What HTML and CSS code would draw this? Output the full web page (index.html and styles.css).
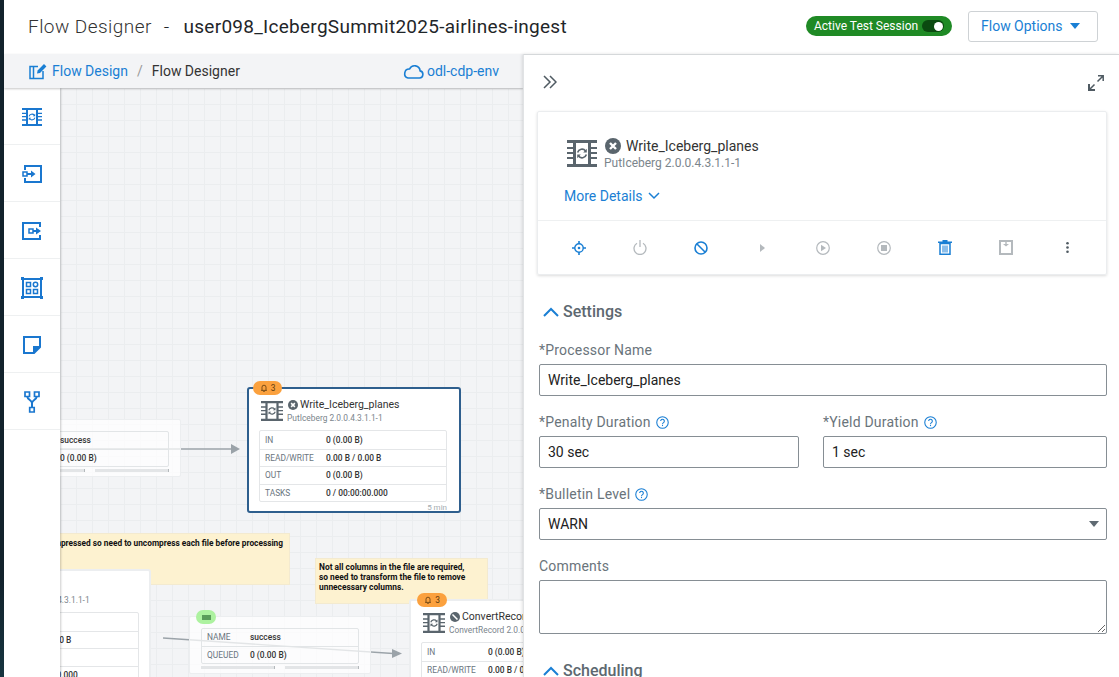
FILE: index.html
```html
<!DOCTYPE html>
<html lang="en">
<head>
<meta charset="utf-8">
<title>Flow Designer</title>
<link rel="stylesheet" href="styles.css">
</head>
<body>
<svg class="defs" width="0" height="0" aria-hidden="true">
  <defs>
    <symbol id="proc" viewBox="0 0 30 27">
      <path fill="currentColor" d="M0 0h30v3H0zM0 24h30v3H0zM6 3h3v21H6zM21 3h3v21h-3zM0 7h6v2H0zM0 12h6v2H0zM0 17h6v2H0zM24 7h6v2h-6zM24 12h6v2h-6zM24 17h6v2h-6z"/>
      <path fill="none" stroke="currentColor" stroke-width="1.6" d="M10.6 12.5a4.6 4.6 0 0 1 8-1.6M19.4 14.5a4.6 4.6 0 0 1-8 1.6"/>
      <path fill="currentColor" d="M19.8 8.8v3.6h-3.6zM10.2 18.2v-3.6h3.6z"/>
    </symbol>
    <symbol id="stopped" viewBox="0 0 16 16">
      <circle cx="8" cy="8" r="8" fill="currentColor"/>
      <path stroke="#fff" stroke-width="2.4" d="M5 5l6 6M11 5l-6 6"/>
    </symbol>
    <symbol id="help" viewBox="0 0 12 12">
      <circle cx="6" cy="6" r="5.3" fill="none" stroke="currentColor"/>
      <path fill="none" stroke="currentColor" d="M4.3 4.7a1.7 1.7 0 1 1 2.6 1.4C6.300 6.500 6 6.800 6 7.500"/>
      <path fill="currentColor" d="M5.500 8.300h1v1h-1z"/>
    </symbol>
    <symbol id="bell" viewBox="0 0 10 10">
      <path fill="none" stroke="currentColor" d="M1.500 8h7M2.500 8V4a2.500 2.500 0 0 1 5 0v4M4 9.500h2"/>
    </symbol>
    <symbol id="up" viewBox="0 0 16 10">
      <path fill="none" stroke="currentColor" stroke-width="2" d="M1 9l7-7 7 7"/>
    </symbol>
  </defs>
</svg>

<div class="rail"></div>
<div class="app">
  <header class="topbar">
    <h1 class="page-title"><span class="title-light">Flow Designer</span><span class="title-sep">-</span><span class="title-name">user098_IcebergSummit2025-airlines-ingest</span></h1>
    <div class="session">Active Test Session<span class="toggle"><span class="knob"></span></span></div>
    <button class="options" type="button">Flow Options<span class="caret"></span></button>
  </header>

  <div class="workspace">
    <section class="designer">
      <nav class="crumbs">
        <svg class="crumb-icon" width="18" height="17" viewBox="0 0 18 17"><path fill="none" stroke="currentColor" stroke-width="1.500" d="M1 3.500h3.500v12H1zM4.500 3.500H9M4.500 15.500H14V8"/><path fill="currentColor" d="M8 10.500l.6-3L15 1l2.400 2.400-6.400 6.500z"/></svg>
        <a class="crumb-link">Flow Design</a>
        <span class="crumb-sep">/</span>
        <span class="crumb-current">Flow Designer</span>
        <span class="env">
          <svg width="21" height="15" viewBox="0 0 21 15"><path fill="none" stroke="currentColor" stroke-width="1.600" d="M5 14h11.500a3.600 3.600 0 0 0 .6-7.100A5.500 5.500 0 0 0 6.600 5 4.600 4.600 0 0 0 5 14z"/></svg>
          odl-cdp-env
        </span>
      </nav>
      <div class="stage">
        <aside class="tools">
          <div class="tool"><svg width="20" height="18"><use href="#proc"/></svg></div>
          <div class="tool"><svg width="20" height="18" viewBox="0 0 20 18"><path fill="none" stroke="currentColor" stroke-width="2" d="M3 5V1h16v16H3v-4"/><path fill="none" stroke="currentColor" stroke-width="1.500" d="M1 7h4v4H1z"/><path fill="currentColor" d="M5 8h4V5.500L13.500 9 9 12.500V10H5z"/></svg></div>
          <div class="tool"><svg width="20" height="18" viewBox="0 0 20 18"><path fill="none" stroke="currentColor" stroke-width="2" d="M18 5V1H1v16h17v-4"/><path fill="none" stroke="currentColor" stroke-width="1.500" d="M7 7h4v4H7z"/><path fill="currentColor" d="M11 8h3V5.500L19 9l-5 3.500V10h-3z"/></svg></div>
          <div class="tool"><svg width="22" height="22" viewBox="0 0 22 22"><path fill="none" stroke="currentColor" stroke-width="2" d="M2 2h18v18H2z"/><path fill="currentColor" d="M0 0h3v3H0zM19 0h3v3h-3zM0 19h3v3H0zM19 19h3v3h-3z"/><path fill="none" stroke="currentColor" stroke-width="1.500" d="M5.500 5.500h4v4h-4zM5.500 12.500h4v4h-4zM12.500 12.500h4v4h-4z"/><circle cx="14.500" cy="7.500" r="2.200" fill="none" stroke="currentColor" stroke-width="1.500"/></svg></div>
          <div class="tool"><svg width="18" height="18" viewBox="0 0 18 18"><path fill="none" stroke="currentColor" stroke-width="2" d="M1 1h16v10l-6 6H1z"/><path fill="currentColor" d="M10 17v-7h7v1l-6 6z"/></svg></div>
          <div class="tool"><svg width="16" height="22" viewBox="0 0 16 22"><path fill="none" stroke="currentColor" stroke-width="1.700" d="M1 1h4.500v4.500H1zM10.500 1H15v4.500h-4.500zM5.700 16.500h4.500V21H5.700z"/><path fill="none" stroke="currentColor" stroke-width="2" d="M3.200 5.500C3.500 9 8 9 8 12c0-3 4.500-3 4.800-6.500M8 11v5"/></svg></div>
        </aside>

        <div class="canvas">
          <svg class="edges" width="463" height="589" viewBox="0 0 463 589" aria-hidden="true">
            <path class="edge" d="M0 361H172"/>
            <path class="edge-head" d="M171 356l9 5-9 5z"/>
            <path class="edge" d="M103 550L333 565.500"/>
            <path class="edge-head" d="M332 561l10 4.500-10 4.500z"/>
          </svg>

          <div class="conn conn-top">
            <div class="conn-table">
              <div class="conn-row"><span class="k">NAME</span><span class="v">success</span></div>
              <div class="conn-row"><span class="k">QUEUED</span><span class="v">0 (0.00 B)</span></div>
            </div>
            <div class="conn-bars"><span></span><span></span></div>
          </div>

          <div class="note note-wide">Files are compressed so need to uncompress each file before processing</div>
          <div class="note note-small">Not all columns in the file are required,<br>so need to transform the file to remove<br>unnecessary columns.</div>

          <div class="node node-main">
            <span class="bulletin"><svg width="8" height="8"><use href="#bell"/></svg>3</span>
            <div class="node-head">
              <svg class="node-icon" width="22" height="20"><use href="#proc"/></svg>
              <div class="node-text">
                <div class="node-title"><svg width="10" height="10"><use href="#stopped"/></svg>Write_Iceberg_planes</div>
                <div class="node-sub">PutIceberg 2.0.0.4.3.1.1-1</div>
              </div>
            </div>
            <div class="stats">
              <div class="stat"><span class="k">IN</span><span class="v">0 (0.00 B)</span></div>
              <div class="stat"><span class="k">READ/WRITE</span><span class="v">0.00 B / 0.00 B</span></div>
              <div class="stat"><span class="k">OUT</span><span class="v">0 (0.00 B)</span></div>
              <div class="stat"><span class="k">TASKS</span><span class="v">0 / 00:00:00.000</span></div>
            </div>
            <div class="node-foot">5 min</div>
          </div>

          <div class="node node-left">
            <div class="node-head">
              <svg class="node-icon" width="22" height="20"><use href="#proc"/></svg>
              <div class="node-text">
                <div class="node-title"><svg width="10" height="10"><use href="#stopped"/></svg>Uncompress</div>
                <div class="node-sub">UnpackContent 2.0.0.4.3.1.1-1</div>
              </div>
            </div>
            <div class="stats">
              <div class="stat"><span class="k">IN</span><span class="v"></span></div>
              <div class="stat"><span class="k">READ/WRITE</span><span class="v">0.00 B / 0.00 B</span></div>
              <div class="stat"><span class="k">OUT</span><span class="v"></span></div>
              <div class="stat"><span class="k">TASKS</span><span class="v">0 / 00:00:00.000</span></div>
            </div>
          </div>

          <div class="conn conn-bottom">
            <span class="conn-badge"><i></i></span>
            <div class="conn-table">
              <div class="conn-row"><span class="k">NAME</span><span class="v">success</span></div>
              <div class="conn-row"><span class="k">QUEUED</span><span class="v">0 (0.00 B)</span></div>
            </div>
            <div class="conn-bars"><span></span><span></span></div>
          </div>

          <div class="node node-convert">
            <span class="bulletin"><svg width="8" height="8"><use href="#bell"/></svg>3</span>
            <div class="node-head">
              <svg class="node-icon" width="22" height="20"><use href="#proc"/></svg>
              <div class="node-text">
                <div class="node-title"><svg width="10" height="10" viewBox="0 0 16 16"><circle cx="8" cy="8" r="8" fill="currentColor"/><path stroke="#fff" stroke-width="2.400" d="M4 4l8 8"/></svg>ConvertRecord</div>
                <div class="node-sub">ConvertRecord 2.0.0.4.3.1.1-1</div>
              </div>
            </div>
            <div class="stats">
              <div class="stat"><span class="k">IN</span><span class="v">0 (0.00 B)</span></div>
              <div class="stat"><span class="k">READ/WRITE</span><span class="v">0.00 B / 0.00 B</span></div>
            </div>
          </div>
        </div>
      </div>
    </section>

    <aside class="panel">
      <div class="panel-top">
        <svg class="collapse" width="14" height="14" viewBox="0 0 14 14"><path fill="none" stroke="currentColor" stroke-width="1.500" d="M1 1l6 6-6 6M7 1l6 6-6 6"/></svg>
        <svg class="expand" width="16" height="16" viewBox="0 0 16 16"><path fill="none" stroke="currentColor" stroke-width="1.500" d="M9.500 6.500L15 1M10 .8h5.200V6M6.500 9.500L1 15"/><path fill="currentColor" d="M0 9h2v5h5v2H0z"/></svg>
      </div>

      <div class="card">
        <div class="card-body">
          <div class="card-head">
            <svg class="card-icon" width="30" height="27"><use href="#proc"/></svg>
            <div>
              <div class="card-title"><svg width="16" height="16"><use href="#stopped"/></svg>Write_Iceberg_planes</div>
              <div class="card-sub">PutIceberg 2.0.0.4.3.1.1-1</div>
            </div>
          </div>
          <a class="more">More Details<svg width="12" height="8" viewBox="0 0 12 8"><path fill="none" stroke="currentColor" stroke-width="1.500" d="M1 1l5 5 5-5"/></svg></a>
        </div>
        <div class="actions">
          <span class="action on"><svg width="14" height="14" viewBox="0 0 14 14"><circle cx="7" cy="7" r="4.200" fill="none" stroke="currentColor" stroke-width="1.400"/><circle cx="7" cy="7" r="1.300" fill="currentColor"/><path stroke="currentColor" stroke-width="1.600" d="M7 0v3M7 11v3M0 7h3M11 7h3"/></svg></span>
          <span class="action off"><svg width="14" height="15" viewBox="0 0 14 15"><path fill="none" stroke="currentColor" stroke-width="1.300" d="M4 3.300a6 6 0 1 0 6 0M7 0v7"/></svg></span>
          <span class="action on"><svg width="14" height="14" viewBox="0 0 14 14"><circle cx="7" cy="7" r="6" fill="none" stroke="currentColor" stroke-width="1.600"/><path stroke="currentColor" stroke-width="1.600" d="M3 3l8 8"/></svg></span>
          <span class="action off"><svg width="5" height="8" viewBox="0 0 5 8"><path fill="currentColor" d="M0 0l5 4-5 4z"/></svg></span>
          <span class="action off"><svg width="14" height="14" viewBox="0 0 14 14"><circle cx="7" cy="7" r="6.300" fill="none" stroke="currentColor" stroke-width="1.200"/><path fill="currentColor" d="M5 3.800L10 7l-5 3.200z"/></svg></span>
          <span class="action off"><svg width="14" height="14" viewBox="0 0 14 14"><circle cx="7" cy="7" r="6.300" fill="none" stroke="currentColor" stroke-width="1.200"/><path fill="currentColor" d="M4 4h6v6H4z"/></svg></span>
          <span class="action on"><svg width="14" height="15" viewBox="0 0 14 15"><path fill="currentColor" d="M0 1.500h4.500V0h5v1.500H14V3H0z"/><path fill="none" stroke="currentColor" stroke-width="1.500" d="M2 3.500h10v10.700H2z"/><path stroke="currentColor" d="M5 5.500v7M7 5.500v7M9 5.500v7"/></svg></span>
          <span class="action off"><svg width="14" height="15" viewBox="0 0 14 15"><path fill="none" stroke="currentColor" stroke-width="2" d="M1 1h12v13H1z"/><path fill="currentColor" d="M6.300 2h1.400v2H10L7 6.500 4 4h2.300z"/></svg></span>
          <span class="action dots"><svg width="3" height="11" viewBox="0 0 3 11"><circle cx="1.500" cy="1.300" r="1.300" fill="currentColor"/><circle cx="1.500" cy="5.500" r="1.300" fill="currentColor"/><circle cx="1.500" cy="9.700" r="1.300" fill="currentColor"/></svg></span>
        </div>
      </div>

      <form class="form">
        <h2 class="section"><svg width="16" height="10"><use href="#up"/></svg>Settings</h2>
        <div class="group">
          <div class="label">*Processor Name</div>
          <div class="input">Write_Iceberg_planes</div>
        </div>
        <div class="group two">
          <div>
            <div class="label">*Penalty Duration<svg width="13" height="13"><use href="#help"/></svg></div>
            <div class="input">30 sec</div>
          </div>
          <div>
            <div class="label">*Yield Duration<svg width="13" height="13"><use href="#help"/></svg></div>
            <div class="input">1 sec</div>
          </div>
        </div>
        <div class="group">
          <div class="label">*Bulletin Level<svg width="13" height="13"><use href="#help"/></svg></div>
          <div class="input select">WARN<span class="select-caret"></span></div>
        </div>
        <div class="group">
          <div class="label">Comments</div>
          <textarea class="comments" aria-label="Comments"></textarea>
        </div>
        <h2 class="section section-next"><svg width="16" height="10"><use href="#up"/></svg>Scheduling</h2>
      </form>
    </aside>
  </div>
</div>
</body>
</html>
```

FILE: styles.css
```css
* { box-sizing: border-box; }
html, body { height: 100%; }
body {
  margin: 0;
  display: flex;
  height: 677px;
  overflow: hidden;
  font-family: Roboto, "Liberation Sans", sans-serif;
  font-size: 14px;
  color: #333;
  background: #fff;
}
.defs { position: absolute; }
.rail { width: 4px; flex: none; background: linear-gradient(#12222c 85%, #173540); }
.app { flex: 1; min-width: 0; display: flex; flex-direction: column; }

/* top bar */
.topbar { height: 54px; flex: none; display: flex; align-items: center; padding: 0 21px 2px 24px; }
.page-title { margin: 0 auto 0 0; font-size: 19px; font-weight: 400; display: flex; align-items: baseline; letter-spacing: .27px; color: #1f2629; }
.title-light { font-weight: 300; color: #333; letter-spacing: .45px; }
.title-sep { margin: 0 14px 0 12px; font-weight: 300; }
.session {
  width: 146px; height: 20px; border-radius: 10px; background: #1f8a25; color: #fff;
  font-size: 12px; display: flex; align-items: center; justify-content: space-between; padding: 0 8px 0 8px;
}
.toggle { width: 22px; height: 12px; border-radius: 6px; background: #0b4a10; display: flex; align-items: center; justify-content: flex-end; padding-right: 1px; }
.knob { width: 9px; height: 9px; border-radius: 50%; background: #fff; }
.options {
  width: 130px; height: 31px; margin-left: 16px; padding: 0 0 0 12px;
  display: flex; align-items: center; background: #fff; border: 1px solid #ced2d5; border-radius: 3px;
  font: 14px Roboto, sans-serif; color: #1a7fd4;
}
.caret { margin-left: 7px; border: 5.500px solid transparent; border-top: 6px solid #1a7fd4; border-bottom: 0; margin-top: -1px; }

/* workspace */
.workspace { flex: 1; min-height: 0; display: flex; }
.designer { width: 519px; flex: none; display: flex; flex-direction: column; }
.crumbs {
  height: 34px; flex: none; display: flex; align-items: center; padding: 0 24px 0 25px;
  background: #f3f4f6; box-shadow: 0 1px 2px rgba(0,0,0,.22); position: relative; z-index: 3;
}
.crumb-icon { color: #1a7fd4; margin-right: 5px; }
.crumb-link { color: #1a7fd4; }
.crumb-sep { margin: 0 9px 0 9px; color: #999; }
.crumb-current { color: #333; }
.env { margin-left: auto; display: flex; align-items: center; gap: 3px; color: #1a7fd4; }
.stage { flex: 1; min-height: 0; display: flex; }
.tools { width: 56px; flex: none; background: #fff; box-shadow: 1px 0 2px rgba(0,0,0,.2); position: relative; z-index: 2; }
.tool { height: 57px; display: flex; align-items: center; justify-content: center; border-bottom: 1px solid #eef0f1; color: #1a77cf; padding-top: 1px; }

/* canvas */
.canvas {
  flex: 1; position: relative; overflow: hidden; background-color: #f3f4f6;
  background-image: linear-gradient(#ebedef 1px, transparent 1px), linear-gradient(90deg, #ebedef 1px, transparent 1px);
  background-size: 16px 16px;
}
.edges { position: absolute; left: 0; top: 0; }
.edge { stroke: #9ba3a9; stroke-width: 1.300; fill: none; }
.edge-head { fill: #9ba3a9; }

.note { position: absolute; background: #fdf2d0; border: 1px solid #f3ead0; font-size: 8.400px; font-weight: 700; line-height: 10px; color: #111; padding: 3px 3px; }
.note-wide { left: -130px; top: 445px; width: 360px; height: 52px; text-align: right; padding: 4px 6px 0 0; font-size: 8.300px; }
.note-small { left: 255px; top: 470px; width: 173px; height: 46px; }

.conn { position: absolute; width: 182px; height: 58px; background: rgba(255,255,255,.72); border: 1px solid #eceef0; border-radius: 2px; padding: 11px 11px 0; font-size: 8.400px; }
.conn-top { left: -61px; top: 331px; }
.conn-bottom { left: 129px; top: 528px; }
.conn-table { border: 1px solid #e2e5e7; border-radius: 2px; height: 36px; }
.conn-row { height: 17px; display: flex; align-items: center; padding: 0 0 1px 5px; }
.conn-row + .conn-row { border-top: 1px solid #e2e5e7; height: 18px; }
.conn-row .k { width: 43px; color: #6b7680; }
.conn-row .v { color: #333; font-weight: 500; }
.conn-bars { display: flex; gap: 10px; margin-top: 2px; }
.conn-bars span { height: 3px; width: 75px; background: #e3e5e7; border-right: 1px solid #b4b9bc; }
.conn-badge { position: absolute; left: 6px; top: -7px; width: 20px; height: 14px; border-radius: 7px; background: #adf2a0; display: flex; align-items: center; justify-content: center; }
.conn-badge i { width: 9px; height: 5px; background: #5a9d5a; }

.node { position: absolute; width: 214px; height: 126px; background: #fff; border: 2px solid #eceef0; border-radius: 3px; padding: 0 12px 0 10px; font-size: 8.400px; }
.node-main { left: 187px; top: 299px; border-color: #2f5f8e; z-index: 1; }
.node-left { left: -123px; top: 481px; padding-right: 10px; }
.node-convert { left: 349px; top: 511px; }
.bulletin {
  position: absolute; left: 4px; top: -8px; width: 29px; height: 14px; border-radius: 7px;
  background: #fba13e; color: #5a3a10; font-size: 8.400px;
  display: flex; align-items: center; justify-content: center; gap: 3px;
}
.node-convert .bulletin { left: 6px; width: 30px; }
.node-head { height: 41px; display: flex; padding: 12px 0 0 2px; }
.node-icon { color: #5a656d; margin-right: 4px; flex: none; }
.node-text { min-width: 0; white-space: nowrap; }
.node-title { display: flex; align-items: center; gap: 2px; font-size: 10.500px; line-height: 12px; height: 12px; color: #333; padding-left: 1px; margin-top: -2px; }
.node-title svg { color: #5a656d; flex: none; }
.node-sub { color: #7b858c; line-height: 12px; margin-top: 1px; }
.stats { border: 1px solid #e4e6e8; border-radius: 2px; }
.stat { height: 17.500px; display: flex; align-items: center; padding-left: 5px; }
.stat + .stat { border-top: 1px solid #e4e6e8; }
.stat .k { width: 61px; flex: none; color: #6b7680; }
.stat .v { font-weight: 500; color: #333; white-space: nowrap; }
.node-foot { text-align: right; color: #a4abb0; font-size: 8px; line-height: 11px; margin-top: 0; }

/* panel */
.panel { flex: 1; min-width: 0; background: #fff; border-top: 1px solid #d5d8da; border-left: 1px solid #e1e3e5; box-shadow: -1px 0 3px rgba(0,0,0,.12); position: relative; z-index: 4; padding: 0 12px 0 13px; overflow: hidden; }
.panel-top { height: 56px; display: flex; align-items: flex-start; justify-content: space-between; padding: 20px 3px 0 6px; color: #4f5a62; }
.collapse { margin-left: 0; }
.card { border: 1px solid #ebedef; border-radius: 2px; box-shadow: 0 1px 3px rgba(0,0,0,.14); height: 164px; }
.card-body { height: 109px; padding: 28px 0 0 29px; border-bottom: 1px solid #eef0f1; }
.card-head { display: flex; color: #333; }
.card-icon { color: #5a656d; margin-right: 7px; flex: none; }
.card-title { display: flex; align-items: center; gap: 5px; font-size: 14px; line-height: 16px; margin-top: -2px; padding-left: 1px; }
.card-title svg { color: #5a656d; }
.card-sub { font-size: 12px; line-height: 14px; color: #7b858c; margin-top: 2px; }
.more { display: flex; align-items: center; gap: 5px; margin: 16px 0 0 -3px; color: #1a7fd4; line-height: 20px; }
.actions { display: flex; padding-left: 10.500px; height: 53px; align-items: center; }
.action { width: 61px; display: flex; justify-content: center; }
.action.on { color: #1a7fd4; }
.action.off { color: #b4b9bd; }
.action.dots { color: #4f5a62; }

.form { padding-left: 2px; }
.section { margin: 25px 0 16px; height: 24px; display: flex; align-items: center; gap: 4px; font-size: 16px; font-weight: 500; color: #5d6870; padding: 0 0 1px 4px; }
.section svg { color: #1a7fd4; flex: none; margin-top: 1px; }
.section-next { margin-top: 25px; }
.group { margin-bottom: 16px; }
.group.two { display: grid; grid-template-columns: 260px 1fr; column-gap: 24px; }
.label { height: 24px; padding-bottom: 4px; display: flex; align-items: center; gap: 5px; color: #6a747b; line-height: 20px; letter-spacing: .2px; }
.label svg { color: #1a7fd4; }
.input { height: 32px; border: 1px solid #868e94; border-radius: 2px; padding: 0 8px; display: flex; align-items: center; color: #222; background: #fff; }
.select { justify-content: space-between; }
.select-caret { border: 5px solid transparent; border-top: 6px solid #5f6a72; border-bottom: 0; margin-right: -1px; }
.comments { display: block; width: 100%; height: 54px; border: 1px solid #868e94; border-radius: 2px; margin: 0; padding: 6px 8px; background: #fff; outline: none; }
.group:has(.comments) { margin-bottom: 0; }
```
